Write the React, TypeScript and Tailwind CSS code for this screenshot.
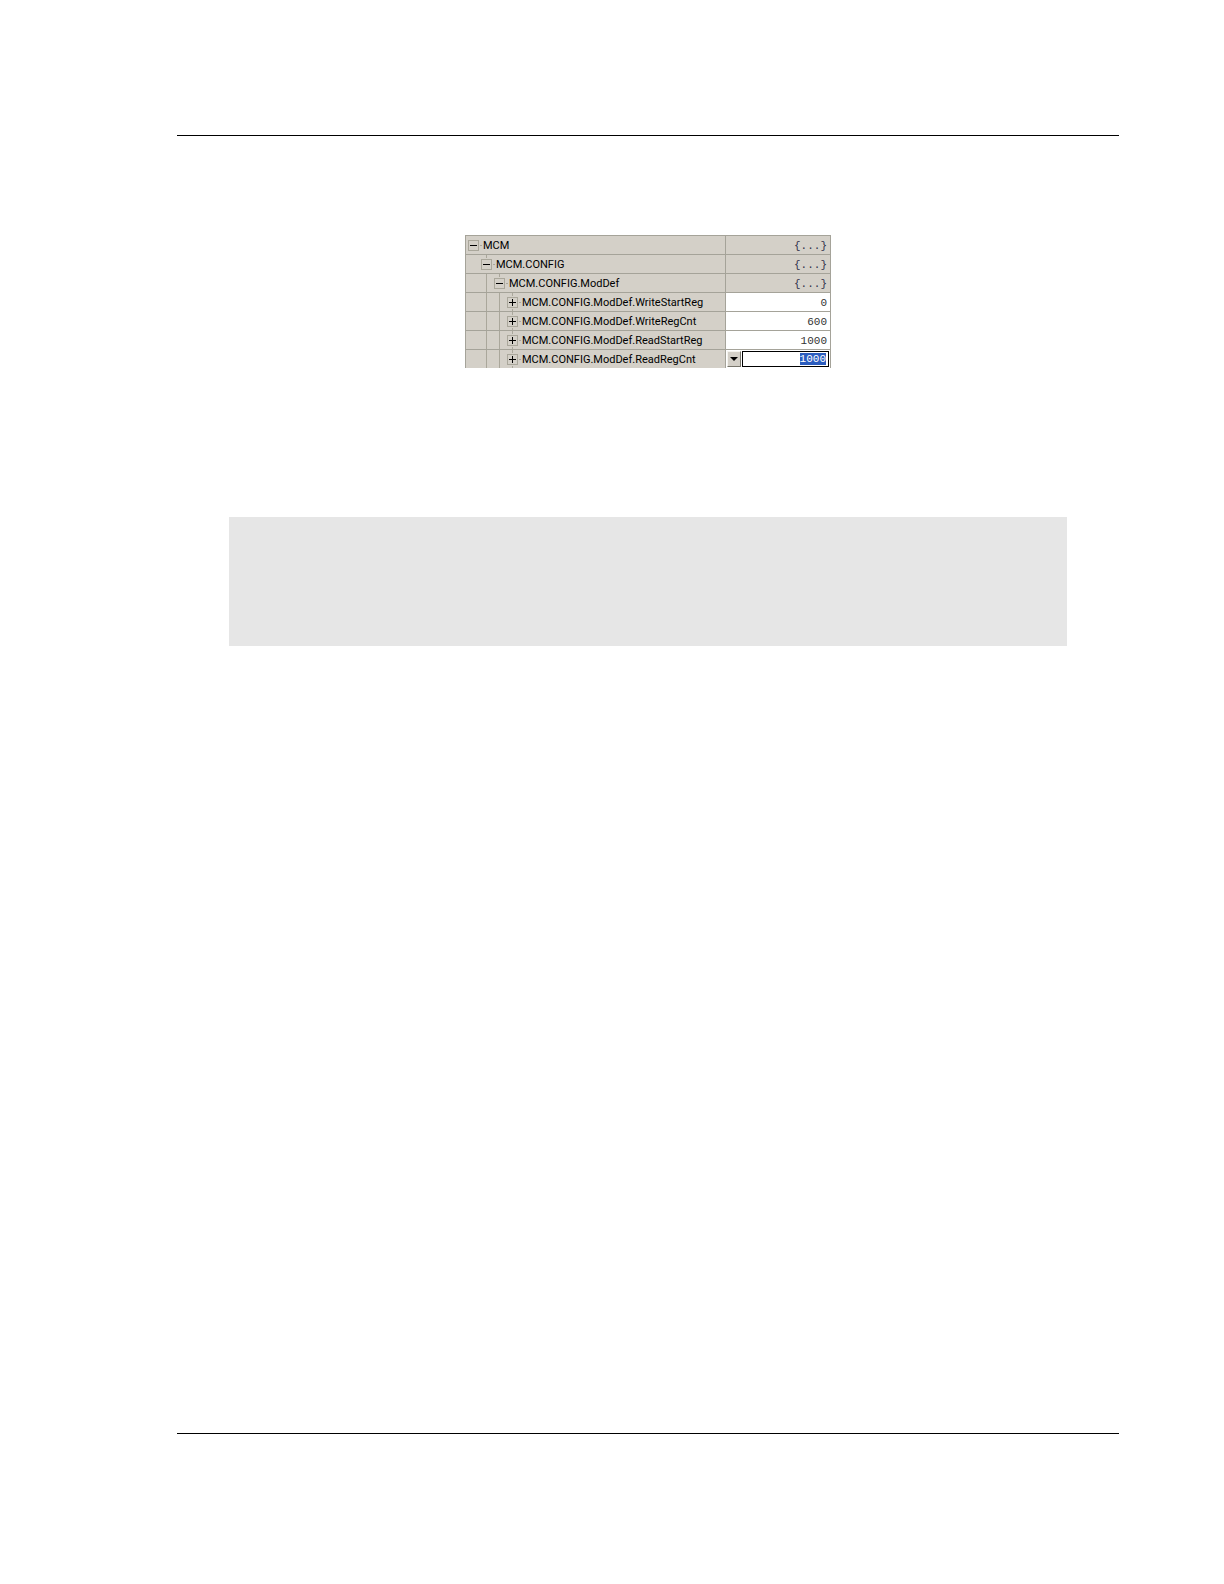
import React, { useEffect, useRef } from "react";

type Tag = {
  name: string;
  level: number;
  value: string;
  open?: boolean;
};

const tags: Tag[] = [
  { name: "MCM", level: 0, value: "{...}", open: true },
  { name: "MCM.CONFIG", level: 1, value: "{...}", open: true },
  { name: "MCM.CONFIG.ModDef", level: 2, value: "{...}", open: true },
  { name: "MCM.CONFIG.ModDef.WriteStartReg", level: 3, value: "0" },
  { name: "MCM.CONFIG.ModDef.WriteRegCnt", level: 3, value: "600" },
  { name: "MCM.CONFIG.ModDef.ReadStartReg", level: 3, value: "1000" },
  { name: "MCM.CONFIG.ModDef.ReadRegCnt", level: 3, value: "1000" },
];

function Toggle({ tag }: { tag: Tag }) {
  return (
    <button
      type="button"
      aria-label={tag.name}
      aria-expanded={!!tag.open}
      className="block h-[18px] w-[15px] shrink-0"
    >
      <svg width="15" height="18" viewBox="0 0 15 18" className="block">
        <g fill="#aaa79b">
          {tag.level > 0 && <rect x="5" y="0" width="1" height="3" />}
          {!tag.open && <rect x="5" y="16" width="1" height="2" />}
          <path d="M0 4H11V15H0ZM1 5V14H10V5Z" fillRule="evenodd" />
          <rect x="12" y="9" width="2" height="1" />
        </g>
        <rect x="2" y="9" width="7" height="1" />
        {!tag.open && <rect x="5" y="6" width="1" height="7" />}
      </svg>
    </button>
  );
}

function ValueEditor({ tag }: { tag: Tag }) {
  const input = useRef<HTMLInputElement>(null);

  useEffect(() => {
    input.current?.focus();
    input.current?.select();
  }, []);

  return (
    <div className="flex h-[18px] items-center gap-px px-px">
      <button
        type="button"
        aria-label="Edit value"
        className="flex h-4 w-[14px] shrink-0 items-center justify-center border border-t-[#f4f3ee] border-l-[#f4f3ee] border-r-[#77756b] border-b-[#77756b] bg-[#d4d0c8]"
      >
        <svg width="8" height="4" viewBox="0 0 8 4">
          <path d="M0 0H8L4 4Z" fill="#000" />
        </svg>
      </button>
      <input
        ref={input}
        aria-label={tag.name}
        defaultValue={tag.value}
        className="h-4 w-full min-w-0 border border-black bg-white pr-[2px] text-right leading-3 caret-transparent outline-none selection:bg-[#2b5cbe] selection:text-white"
      />
    </div>
  );
}

function TagRow({ tag, editing }: { tag: Tag; editing: boolean }) {
  return (
    <tr className="h-[19px]">
      <td className="border-t border-l border-[#a5a399] bg-[#d4d0c8] p-0">
        <div className="flex h-[18px] pl-[2px]">
          {Array.from({ length: tag.level }, (_, i) => (
            <span key={i} className="flex h-[18px] w-[13px] shrink-0 pl-[5px]">
              {i > 0 && <span className="w-px bg-[#aaa79b]" />}
            </span>
          ))}
          <Toggle tag={tag} />
          <span className="whitespace-nowrap font-[Roboto,sans-serif] text-[11px] leading-5">
            {tag.name}
          </span>
        </div>
      </td>
      <td
        className={
          "border-t border-x border-[#a5a399] p-0 text-right font-['Liberation_Mono',monospace] text-[11px] leading-5 " +
          (tag.open ? "bg-[#d4d0c8] text-[#30304a]" : "bg-white text-[#333]")
        }
      >
        {editing ? <ValueEditor tag={tag} /> : <div className="h-[18px] pr-[3px]">{tag.value}</div>}
      </td>
    </tr>
  );
}

export default function App() {
  return (
    <div className="flex min-h-screen flex-col bg-white pt-[135px] pr-[105px] pb-[150px] pl-[177px] text-black">
      <hr className="border-t border-black" />
      <main className="flex flex-col pt-[99px]">
        <table className="mx-auto w-[366px] table-fixed border-separate border-spacing-0">
          <colgroup>
            <col className="w-[260px]" />
            <col />
          </colgroup>
          <tbody>
            {tags.map((tag, i) => (
              <TagRow key={tag.name} tag={tag} editing={i === tags.length - 1} />
            ))}
          </tbody>
        </table>
        <div className="mx-[52px] mt-[149px] h-[129px] bg-[#e6e6e6]" />
      </main>
      <hr className="mt-auto border-t border-black" />
    </div>
  );
}
